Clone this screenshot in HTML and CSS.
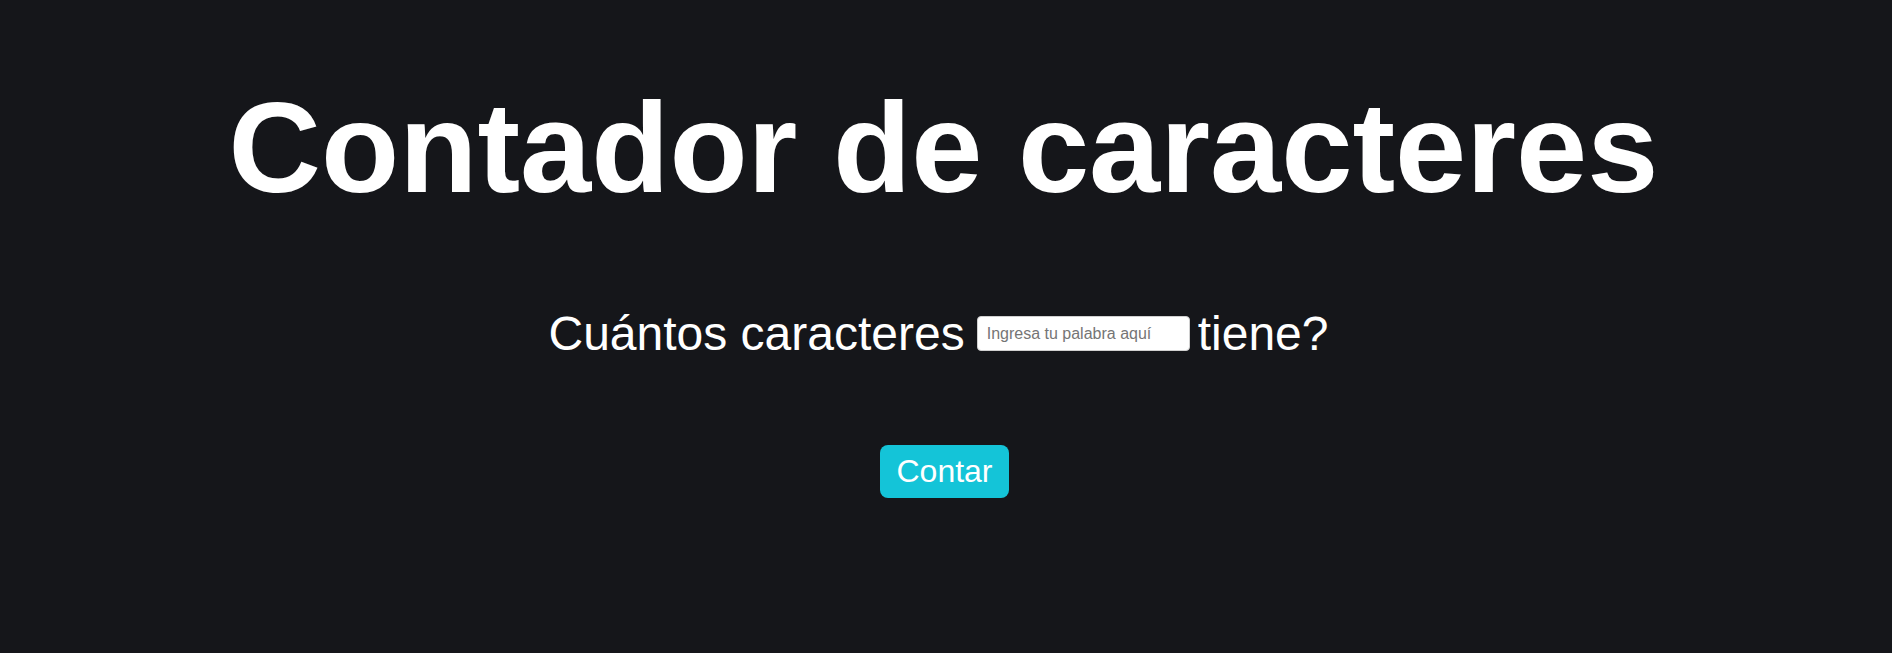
FILE: index.html
```html
<!DOCTYPE html>
<html lang="es">
<head>
<meta charset="utf-8">
<title>Contador de caracteres</title>
<link rel="stylesheet" href="styles.css">
</head>
<body>
<main class="app">
  <h1 class="title">Contador de caracteres</h1>
  <div class="question">
    <span class="question-text">Cuántos caracteres</span>
    <input class="word-input" type="text" placeholder="Ingresa tu palabra aquí">
    <span class="question-text">tiene?</span>
  </div>
  <button class="count-btn" type="button">Contar</button>
</main>
</body>
</html>
```

FILE: styles.css
```css
html, body {
  margin: 0;
  padding: 0;
  background: #15161a;
  height: 100%;
}

body {
  font-family: "Liberation Sans", Arial, sans-serif;
  color: #ffffff;
}

.app {
  display: flex;
  flex-direction: column;
  align-items: center;
  padding: 74px 5px 0 0;
}

.title {
  margin: 0 0 85px 0;
  font-size: 128px;
  font-weight: 700;
  line-height: normal;
  color: #ffffff;
}

.question {
  display: flex;
  align-items: center;
  justify-content: center;
  margin: 0 10px 84px 0;
  font-size: 48px;
  line-height: normal;
}

.word-input {
  box-sizing: border-box;
  width: 213px;
  height: 35px;
  margin: 0 8px 0 12px;
  padding: 8px 9px;
  border: 1px solid #d0d0d0;
  border-radius: 4px;
  background: #ffffff;
  font-family: "Liberation Sans", Arial, sans-serif;
  font-size: 16px;
  color: #222;
  outline: none;
}

.word-input::placeholder {
  color: #757575;
}

.count-btn {
  margin-left: 2px;
  padding: 8px 16px;
  border: none;
  border-radius: 8px;
  background: #14c4d8;
  color: #ffffff;
  font-family: "Liberation Sans", Arial, sans-serif;
  font-size: 32px;
  line-height: normal;
  cursor: pointer;
}
```
